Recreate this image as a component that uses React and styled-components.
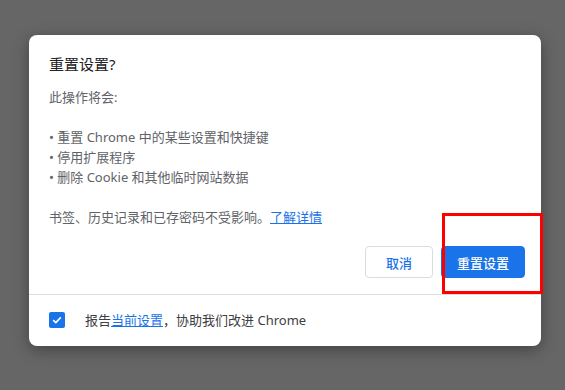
import styled, { createGlobalStyle } from "styled-components";

const GlobalStyle = createGlobalStyle`
  html, body {
    margin: 0;
    padding: 0;
    background: #666666;
  }
  body {
    font-family: "Noto Sans", "Noto Sans CJK SC", sans-serif;
  }
`;

// Page backdrop
const Page = styled.div`
  position: relative;
  width: 565px;
  height: 390px;
  padding: 35px 0 0 29px;
  box-sizing: border-box;
  background: #666666;
  overflow: hidden;
`;

const Dialog = styled.div`
  width: 512px;
  height: 311px;
  background: #fff;
  border-radius: 8px;
  box-shadow: 0 4px 16px rgba(0, 0, 0, 0.35);
  display: flex;
  flex-direction: column;
  box-sizing: border-box;
  overflow: hidden;
`;

const Body = styled.div`
  padding: 19px 16px 16px 20px;
  border-bottom: 1px solid #dadce0;
`;

const Title = styled.h2`
  margin: 0 0 13px;
  font-size: 15px;
  line-height: 20px;
  font-weight: 400;
  color: #202124;
`;

const Text = styled.p`
  margin: 0;
  font-size: 13px;
  line-height: 20px;
  color: #5f6368;
`;

const Link = styled.a`
  color: #1a73e8;
  text-decoration: underline;
  cursor: pointer;
`;

const Actions = styled.div`
  display: flex;
  justify-content: flex-end;
  gap: 8px;
  margin-top: 19px;
`;

const Button = styled.button`
  height: 32px;
  padding: 0 ${(p) => (p.$primary ? "15px" : "20px")};
  border-radius: 4px;
  font-family: inherit;
  font-size: 13px;
  font-weight: 500;
  border: 1px solid ${(p) => (p.$primary ? "#1a73e8" : "#dadce0")};
  background: ${(p) => (p.$primary ? "#1a73e8" : "#fff")};
  color: ${(p) => (p.$primary ? "#fff" : "#1a73e8")};
  cursor: pointer;
`;

const Footer = styled.div`
  flex: 1;
  display: flex;
  align-items: center;
  gap: 20px;
  padding: 0 20px 1px;
`;

const Checkbox = styled.span`
  width: 16px;
  height: 16px;
  border-radius: 2px;
  background: #1a73e8;
  display: flex;
  align-items: center;
  justify-content: center;
  flex-shrink: 0;
`;

const FooterText = styled.span`
  font-size: 13px;
  line-height: 20px;
  color: #3c4043;
`;

// red annotation box drawn over the screenshot
const Highlight = styled.div`
  position: absolute;
  left: 442px;
  top: 213px;
  width: 101px;
  height: 81px;
  border: 3px solid #ff0000;
  box-sizing: border-box;
  pointer-events: none;
`;

function App() {
  return (
    <>
      <GlobalStyle />
      <Page>
        <Dialog>
          <Body>
            <Title>重置设置?</Title>
            <Text>
              此操作将会:
              <br />
              <br />• 重置 Chrome 中的某些设置和快捷键
              <br />• 停用扩展程序
              <br />• 删除 Cookie 和其他临时网站数据
              <br />
              <br />
              书签、历史记录和已存密码不受影响。<Link>了解详情</Link>
            </Text>
            <Actions>
              <Button>取消</Button>
              <Button $primary>重置设置</Button>
            </Actions>
          </Body>
          <Footer>
            <Checkbox>
              <svg width="12" height="12" viewBox="0 0 12 12" fill="none">
                <path d="M2.2 6.2 L4.8 8.6 L9.8 3.4" stroke="#fff" strokeWidth="1.6" />
              </svg>
            </Checkbox>
            <FooterText>
              报告<Link>当前设置</Link>，协助我们改进 Chrome
            </FooterText>
          </Footer>
        </Dialog>
        <Highlight />
      </Page>
    </>
  );
}

export default App;
